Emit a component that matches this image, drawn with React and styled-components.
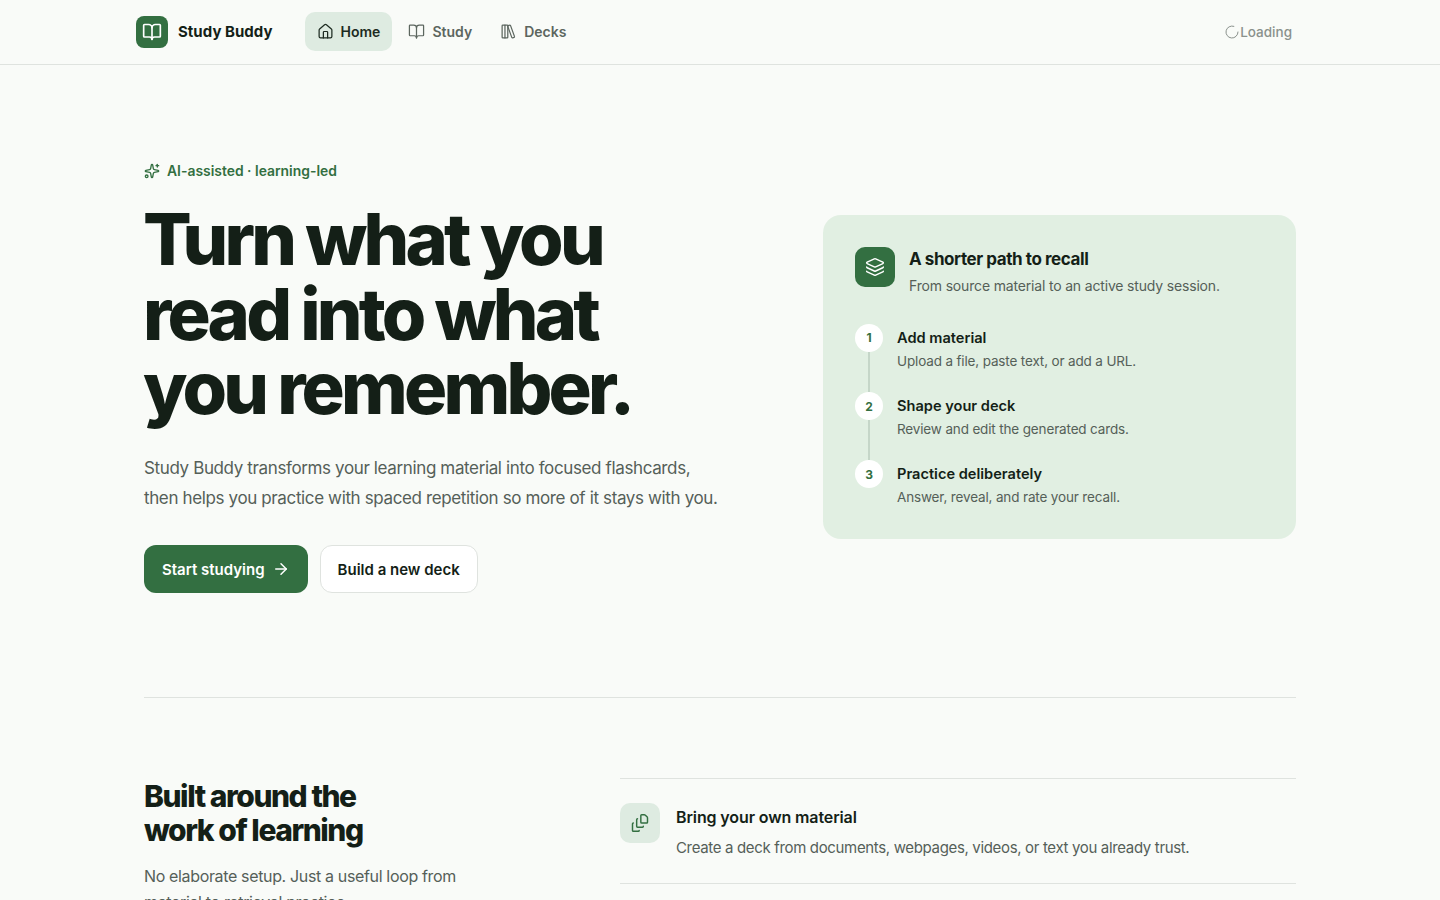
import React from 'react';
import styled, { createGlobalStyle } from 'styled-components';
import { BookOpen, House, LibraryBig, LoaderCircle, Sparkles, ArrowRight, Layers, FileStack } from 'lucide-react';

const Global = createGlobalStyle`
  html, body { margin: 0; padding: 0; background: #f9fbf8; }
  body { font-family: Inter, "Noto Sans", sans-serif; color: #141f17; -webkit-font-smoothing: antialiased; }
  * { box-sizing: border-box; }
`;

const Page = styled.div`height: 900px; overflow: hidden; background: #f9fbf8;`;
const Header = styled.header`height: 65px; border-bottom: 1px solid #dfe3df;`;
const HeaderInner = styled.div`
  width: 1168px; margin: 0 auto; height: 63px; display: flex; align-items: center; justify-content: space-between;
`;
const Left = styled.div`display: flex; align-items: center;`;
const Brand = styled.div`display: flex; align-items: center; gap: 10px; margin-right: 32px;`;
const BrandMark = styled.div`
  width: 32px; height: 32px; border-radius: 8px; background: #336f41; color: #fff;
  display: flex; align-items: center; justify-content: center;
`;
const BrandName = styled.span`font-size: 15px; font-weight: 700; letter-spacing: 0.03px; color: #141f17;`;
const Nav = styled.nav`display: flex; align-items: center; gap: 4px;`;
const NavItem = styled.a`
  display: flex; align-items: center; gap: 7px; height: 39px; padding: 0 12px; border-radius: 10px;
  font-size: 14px; font-weight: 600; color: ${p => (p.$active ? '#1d2b21' : '#5c665f')};
  background: ${p => (p.$active ? '#deebe1' : 'transparent')};
`;
const Loading = styled.div`
  display: flex; align-items: center; padding-right: 12px; font-size: 13.5px; font-weight: 500; color: #8a918c;
`;

const Main = styled.main`width: 1152px; margin: 0 auto;`;
const Hero = styled.section`
  display: grid; grid-template-columns: 1fr 473px; align-items: center; padding: 96px 0 104px;
  border-bottom: 1px solid #dfe3df;
`;
const Eyebrow = styled.div`
  display: flex; align-items: center; gap: 7px; font-size: 13.9px; font-weight: 600; color: #336f41; height: 20px;
`;
const Title = styled.h1`
  margin: 21px 0 0 -1px; font-size: 72px; line-height: 74.5px; font-weight: 800; letter-spacing: -3.8px; color: #141f17;
`;
const Lead = styled.p`
  margin: 27px 0 0; font-size: 17px; line-height: 30.6px; color: #556058; font-weight: 400; letter-spacing: -0.37px;
`;
const Actions = styled.div`display: flex; gap: 12px; margin-top: 31px;`;
const Primary = styled.a`
  display: flex; align-items: center; gap: 7px; height: 48px; padding: 1px 18px 0; border-radius: 12px;
  background: #336f41; color: #fff; font-size: 15px; font-weight: 600;
`;
const Secondary = styled.a`
  display: flex; align-items: center; height: 48px; padding: 1px 17px 0; border-radius: 12px;
  background: #fff; border: 1px solid #dfe3df; color: #141f17; font-size: 15px; font-weight: 600;
`;

const Card = styled.aside`
  height: 324px; padding: 32px; border-radius: 18px; background: #e1efe2;
`;
const CardHead = styled.div`display: flex; gap: 14px; margin-bottom: 27px;`;
const CardIcon = styled.div`
  width: 40px; height: 40px; border-radius: 10px; background: #336f41; color: #fff; flex: none;
  display: flex; align-items: center; justify-content: center;
`;
const CardTitle = styled.h2`margin: 0; font-size: 17px; line-height: 24px; font-weight: 700; letter-spacing: -0.43px; color: #141f17;`;
const CardSub = styled.p`margin: 4px 0 0; font-size: 14px; line-height: 22px; letter-spacing: -0.17px; color: #556058;`;
const Steps = styled.ol`list-style: none; margin: 0; padding: 0;`;
const Step = styled.li`display: flex; gap: 14px; height: 68.3px;`;
const Rail = styled.div`display: flex; flex-direction: column; align-items: center; width: 28px; flex: none;`;
const Num = styled.div`
  width: 28px; height: 28px; border-radius: 50%; background: #fff; color: #336f41; flex: none;
  display: flex; align-items: center; justify-content: center; font-size: 12px; font-weight: 700;
`;
const Line = styled.div`width: 2px; flex: 1; background: #c5d6c8;`;
const StepBody = styled.div`padding-top: 4px;`;
const StepTitle = styled.div`font-size: 14.6px; line-height: 20px; font-weight: 600; color: #141f17;`;
const StepText = styled.div`margin-top: 3px; font-size: 13.5px; line-height: 20px; letter-spacing: -0.15px; color: #556058;`;

const Features = styled.section`
  display: grid; grid-template-columns: 476px 676px; padding-top: 80px;
`;
const FeatHead = styled.div`padding-top: 1px;`;
const H2 = styled.h2`
  margin: 0; font-size: 30px; line-height: 34px; font-weight: 800; letter-spacing: -1.45px; color: #141f17;
`;
const FeatText = styled.p`margin: 16.5px 0 0; width: 340px; font-size: 16px; line-height: 26px; letter-spacing: -0.35px; color: #556058;`;
const FeatList = styled.div`border-top: 1px solid #dfe3df;`;
const Feat = styled.div`
  display: flex; gap: 16px; height: 105px; padding-top: 24px; border-bottom: 1px solid #dfe3df;
`;
const FeatIcon = styled.div`
  width: 40px; height: 40px; border-radius: 10px; background: #deebe1; color: #336f41; flex: none;
  display: flex; align-items: center; justify-content: center;
`;
const FeatTitle = styled.h3`margin: 0; padding-top: 1px; font-size: 16px; line-height: 26px; font-weight: 600; letter-spacing: -0.12px; color: #141f17;`;
const FeatDesc = styled.p`margin: 5px 0 0; font-size: 15px; line-height: 26px; letter-spacing: -0.34px; color: #556058;`;

const steps = [
  ['Add material', 'Upload a file, paste text, or add a URL.'],
  ['Shape your deck', 'Review and edit the generated cards.'],
  ['Practice deliberately', 'Answer, reveal, and rate your recall.'],
];

export default function App() {
  return (
    <Page>
      <Global />
      <Header>
        <HeaderInner>
          <Left>
            <Brand>
              <BrandMark><BookOpen size={20} strokeWidth={2} /></BrandMark>
              <BrandName>Study Buddy</BrandName>
            </Brand>
            <Nav>
              <NavItem $active><House size={17} strokeWidth={1.75} />Home</NavItem>
              <NavItem><BookOpen size={17} strokeWidth={1.75} />Study</NavItem>
              <NavItem><LibraryBig size={17} strokeWidth={1.75} />Decks</NavItem>
            </Nav>
          </Left>
          <Loading><LoaderCircle size={16} strokeWidth={1.5} />Loading</Loading>
        </HeaderInner>
      </Header>
      <Main>
        <Hero>
          <div>
            <Eyebrow><Sparkles size={16} strokeWidth={2} />AI-assisted · learning-led</Eyebrow>
            <Title>Turn what you<br />read into what<br />you remember.</Title>
            <Lead>Study Buddy transforms your learning material into focused flashcards,<br />then helps you practice with spaced repetition so more of it stays with you.</Lead>
            <Actions>
              <Primary>Start studying<ArrowRight size={18} strokeWidth={2} /></Primary>
              <Secondary>Build a new deck</Secondary>
            </Actions>
          </div>
          <Card>
            <CardHead>
              <CardIcon><Layers size={20} strokeWidth={1.75} /></CardIcon>
              <div>
                <CardTitle>A shorter path to recall</CardTitle>
                <CardSub>From source material to an active study session.</CardSub>
              </div>
            </CardHead>
            <Steps>
              {steps.map(([t, d], i) => (
                <Step key={t}>
                  <Rail>
                    <Num>{i + 1}</Num>
                    {i < 2 && <Line />}
                  </Rail>
                  <StepBody>
                    <StepTitle>{t}</StepTitle>
                    <StepText>{d}</StepText>
                  </StepBody>
                </Step>
              ))}
            </Steps>
          </Card>
        </Hero>
        <Features>
          <FeatHead>
            <H2>Built around the<br />work of learning</H2>
            <FeatText>No elaborate setup. Just a useful loop from material to retrieval practice.</FeatText>
          </FeatHead>
          <FeatList>
            <Feat>
              <FeatIcon><FileStack size={20} strokeWidth={1.75} /></FeatIcon>
              <div>
                <FeatTitle>Bring your own material</FeatTitle>
                <FeatDesc>Create a deck from documents, webpages, videos, or text you already trust.</FeatDesc>
              </div>
            </Feat>
          </FeatList>
        </Features>
      </Main>
    </Page>
  );
}
